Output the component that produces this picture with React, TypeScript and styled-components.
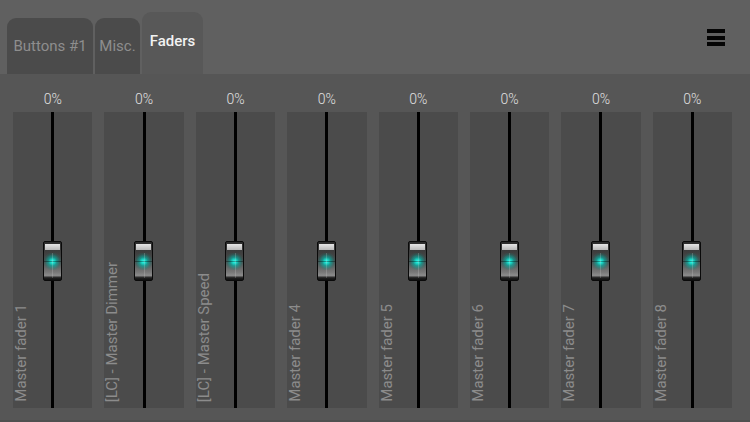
import styled, { createGlobalStyle } from "styled-components";

const faders = [
  "Master fader 1",
  "[LC] - Master Dimmer",
  "[LC] - Master Speed",
  "Master fader 4",
  "Master fader 5",
  "Master fader 6",
  "Master fader 7",
  "Master fader 8",
];

const tabs = [
  { name: "Buttons #1", width: 86, active: false },
  { name: "Misc.", width: 45, active: false },
  { name: "Faders", width: 61, active: true },
];

export default function App() {
  return (
    <>
      <GlobalStyle />
      <Screen>
        <Header>
          <Tabs>
            {tabs.map((t) => (
              <Tab key={t.name} $active={t.active} $width={t.width}>
                {t.name}
              </Tab>
            ))}
          </Tabs>
          <Menu>
            <Bar />
            <Bar />
            <Bar />
          </Menu>
        </Header>
        <Body>
          {faders.map((name) => (
            <Column key={name}>
              <Percent>0%</Percent>
              <Panel>
                <Label>{name}</Label>
                <Track />
                <Knob>
                  <Cap />
                  <Glow />
                </Knob>
              </Panel>
            </Column>
          ))}
        </Body>
      </Screen>
    </>
  );
}

const GlobalStyle = createGlobalStyle`
  html, body {
    margin: 0;
    padding: 0;
    background: #555555;
  }
  body {
    font-family: Roboto, "Liberation Sans", sans-serif;
  }
`;

const Screen = styled.div`
  width: 750px;
  height: 422px;
  display: flex;
  flex-direction: column;
  overflow: hidden;
`;

const Header = styled.div`
  height: 74px;
  background: #606060;
  display: flex;
  align-items: flex-end;
  justify-content: space-between;
  padding: 0 25px 0 7px;
  box-sizing: border-box;
  flex-shrink: 0;
`;

const Tabs = styled.div`
  display: flex;
  align-items: flex-end;
  gap: 2px;
`;

const Tab = styled.div<{ $active: boolean; $width: number }>`
  width: ${({ $width }) => $width}px;
  height: ${({ $active }) => ($active ? 62 : 56)}px;
  padding-bottom: ${({ $active }) => ($active ? 4 : 0)}px;
  box-sizing: border-box;
  display: flex;
  align-items: center;
  justify-content: center;
  white-space: nowrap;
  border-radius: 9px 9px 0 0;
  background: ${({ $active }) => ($active ? "#585858" : "#4b4b4b")};
  color: ${({ $active }) => ($active ? "#f2f2f2" : "#8e8e8e")};
  font-size: 15px;
  font-weight: ${({ $active }) => ($active ? 500 : 400)};
`;

const Menu = styled.div`
  align-self: flex-start;
  margin-top: 29px;
  width: 18px;
  display: flex;
  flex-direction: column;
  gap: 2.5px;
`;

const Bar = styled.div`
  height: 4px;
  background: #050505;
`;

const Body = styled.div`
  flex: 1;
  display: grid;
  grid-template-columns: repeat(8, 1fr);
  column-gap: 12px;
  padding: 14px 18px 12px 13px;
  background: #565656;
  border-bottom: 2px solid #4f4f4f;
  box-sizing: border-box;
  min-height: 0;
`;

const Column = styled.div`
  display: flex;
  flex-direction: column;
  min-height: 0;
`;

const Percent = styled.div`
  height: 24px;
  line-height: 23px;
  text-align: center;
  color: #e0e0e0;
  font-size: 14px;
  font-weight: 300;
`;

const Panel = styled.div`
  flex: 1;
  position: relative;
  background: #4b4b4b;
  display: flex;
  justify-content: center;
`;

const Track = styled.div`
  width: 3px;
  background: #000;
`;

const Label = styled.div`
  position: absolute;
  left: 0;
  bottom: 6px;
  writing-mode: vertical-rl;
  transform: rotate(180deg);
  color: #8c8c8c;
  font-size: 15px;
  white-space: nowrap;
  line-height: 16px;
`;

const Knob = styled.div`
  position: absolute;
  top: 129px;
  left: 50%;
  margin-left: -10px;
  width: 19px;
  height: 40px;
  box-sizing: border-box;
  border: 1px solid #0a0a0a;
  border-radius: 2px;
  background: linear-gradient(
    to bottom,
    #2a2a2a 0%,
    #3a3a3a 20%,
    #4c4c4c 50%,
    #7a7a7a 80%,
    #8c8c8c 88%,
    #202020 94%,
    #111 100%
  );
  overflow: hidden;
`;

const Cap = styled.div`
  position: absolute;
  top: 2px;
  left: 1px;
  right: 1px;
  height: 6px;
  background: linear-gradient(to bottom, #e4e4e4, #b8b8b8);
`;

const Glow = styled.div`
  position: absolute;
  top: 11px;
  left: -2px;
  right: -2px;
  height: 17px;
  background: radial-gradient(
    circle at 50% 50%,
    #3cfff0 0%,
    #19d8c8 15%,
    rgba(0, 180, 168, 0.65) 32%,
    rgba(0, 140, 130, 0.22) 55%,
    rgba(0, 120, 110, 0) 70%
  );
  &::before {
    content: "";
    position: absolute;
    left: 2px;
    right: 2px;
    top: 8px;
    height: 1px;
    background: rgba(0, 0, 0, 0.35);
  }
  &::after {
    content: "";
    position: absolute;
    top: 0;
    bottom: -8px;
    left: 50%;
    width: 1px;
    background: rgba(220, 220, 220, 0.22);
  }
`;
